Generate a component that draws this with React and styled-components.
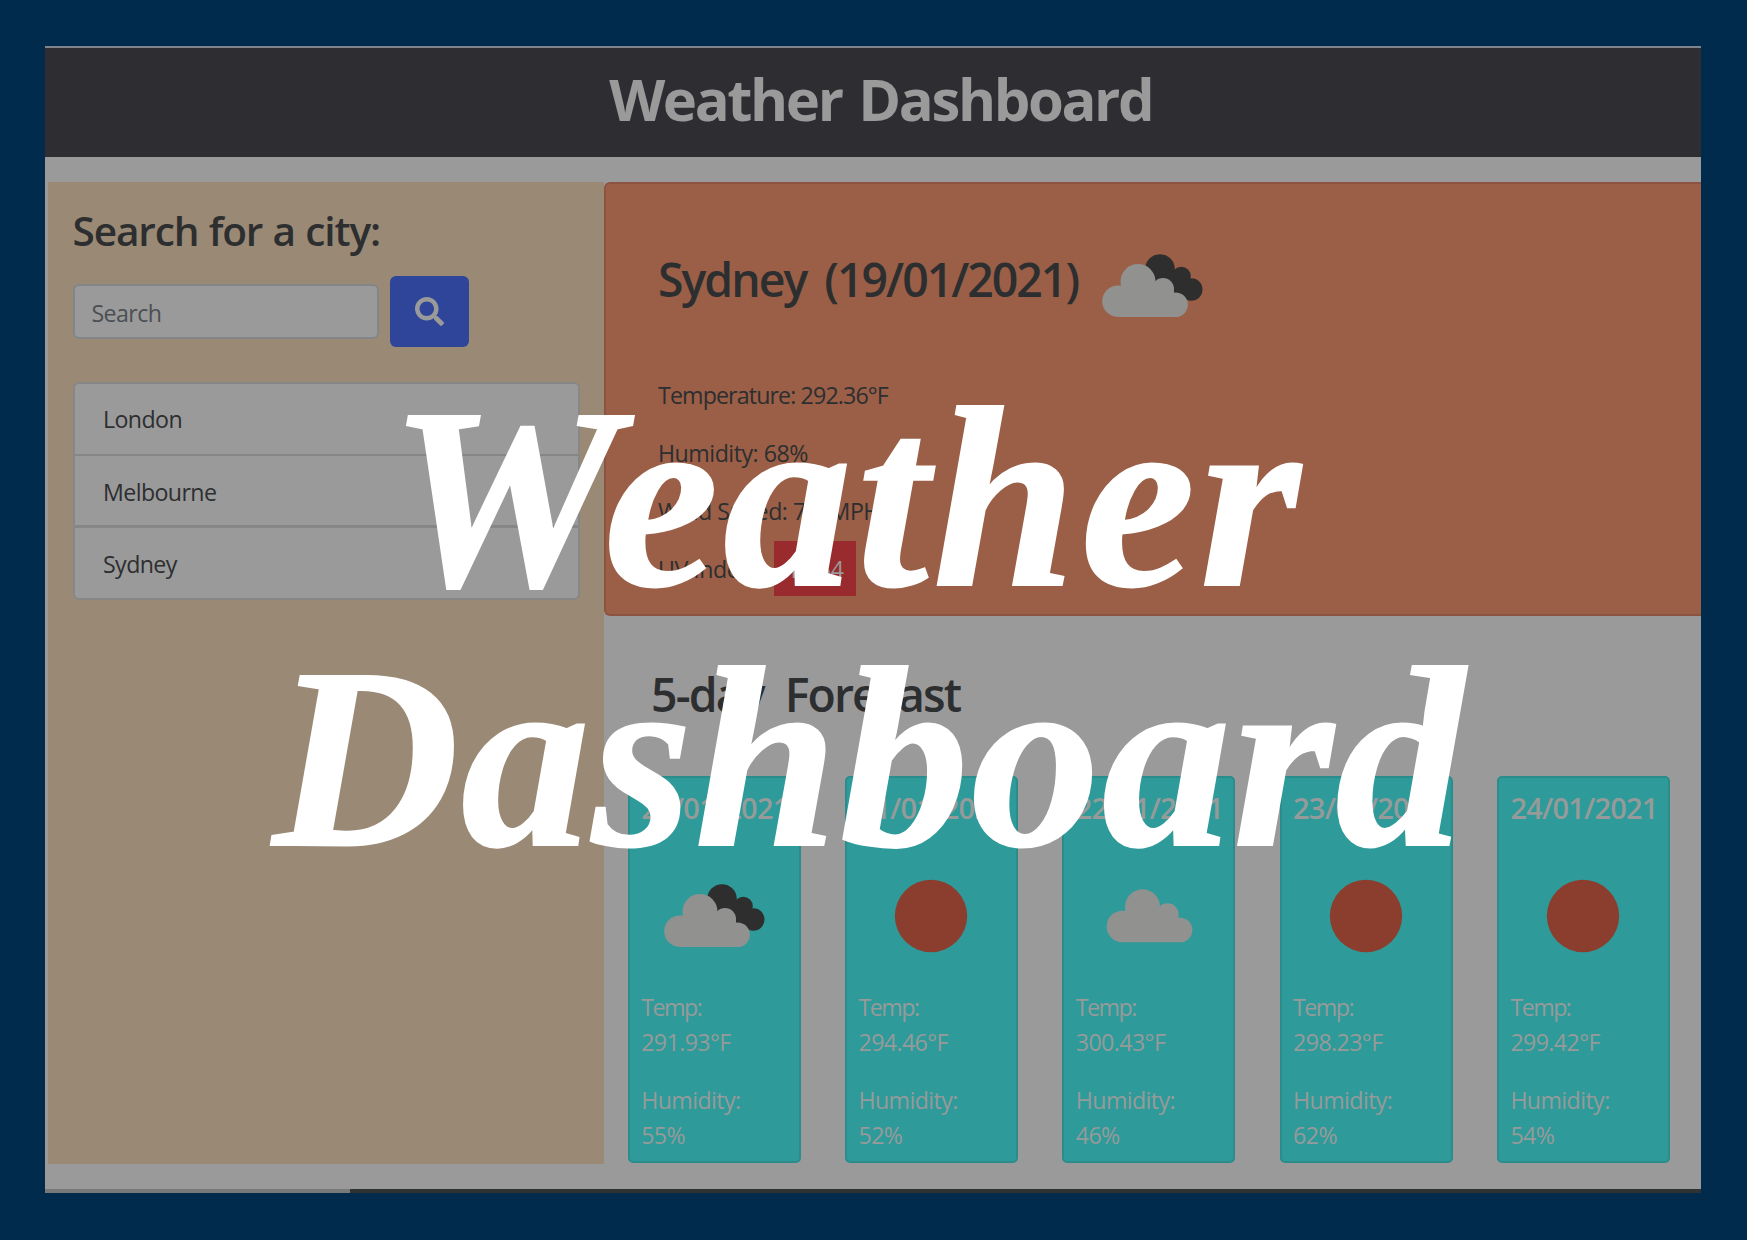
import React from "react";
import styled, { createGlobalStyle } from "styled-components";

const GlobalStyle = createGlobalStyle`
  * { box-sizing: border-box; }
  body {
    margin: 0;
    background: #002b4d;
    font-family: "Open Sans", "Noto Sans", sans-serif;
    font-size: 23.2px;
    line-height: 34.8px;
    letter-spacing: -0.6px;
    color: #2d2e30;
  }
  h1, h2, h3, h4, p, ul { margin: 0; padding: 0; font-weight: inherit; }
`;

const Page = styled.main`
  position: relative;
  width: 1747px;
  height: 1240px;
  padding: 46px 46px 0 45px;
  overflow: hidden;
`;

const Screen = styled.div`
  display: flex;
  flex-direction: column;
  height: 1146.5px;
  background: #9a9a9a;
  border-top: 2px solid #7f858a;
  overflow: hidden;
`;

const TopBar = styled.header`
  height: 109px;
  padding: 16px 0 0 15.5px;
  background: #2e2d31;
  text-align: center;
`;

const BrandTitle = styled.h1`
  font-size: 58px;
  line-height: 69px;
  font-weight: 700;
  letter-spacing: -2.4px;
  word-spacing: 4px;
  color: #9a9a9a;
`;

const Columns = styled.div`
  display: flex;
  flex: 1;
  margin-top: 24.5px;
  padding-left: 3px;
`;

const Sidebar = styled.aside`
  width: 556px;
  height: 982px;
  padding: 25px 24.5px 0;
  background: #9a8a75;
`;

const SearchTitle = styled.h3`
  font-size: 40.6px;
  line-height: 48.7px;
  font-weight: 600;
  letter-spacing: -1.15px;
  word-spacing: 1px;
`;

const SearchForm = styled.div`
  display: flex;
  align-items: center;
  gap: 11px;
  margin-top: 20.5px;
`;

const SearchInput = styled.input`
  width: 306.5px;
  height: 55px;
  padding: 3px 17px 0;
  border: 2px solid #838689;
  border-radius: 6px;
  background: #9a9a9a;
  font: inherit;
  letter-spacing: inherit;
  color: #4b4f54;
  &::placeholder { color: #4b4f54; opacity: 1; }
`;

const SearchButton = styled.button`
  display: flex;
  align-items: center;
  justify-content: center;
  width: 79px;
  height: 71.5px;
  padding-top: 2px;
  border: 0;
  border-radius: 6px;
  background: #2e4599;
`;

const CityList = styled.ul`
  margin-top: 35px;
  border: 2px solid #878788;
  border-radius: 6px;
  background: #9a9a9a;
  list-style: none;
`;

const City = styled.li`
  height: ${(p) => (p.$last ? 70 : p.$heavy ? 72 : 71.5)}px;
  padding: ${(p) => (p.$first ? 17.5 : 19)}px 0 0 28.5px;
  border-bottom: ${(p) => (p.$last ? 0 : p.$heavy ? 3 : 2)}px solid #868686;
`;

const Main = styled.section`
  flex: 1;
  min-width: 0;
`;

const CurrentCard = styled.section`
  height: 434.5px;
  padding: 44.5px 0 0 52px;
  border: 2px solid #8c5440;
  border-right-width: 0;
  border-radius: 6px 0 0 6px;
  background: #9a5f46;
`;

const CurrentHead = styled.div`
  display: flex;
  gap: 15.5px;
  margin-bottom: 33.8px;
`;

const CurrentTitle = styled.h2`
  padding-top: 24px;
  font-size: 46.4px;
  line-height: 55.7px;
  font-weight: 600;
  letter-spacing: -2px;
  word-spacing: 8px;
`;

const Reading = styled.p`
  margin-bottom: 23.2px;
  letter-spacing: ${(p) => p.$track || "-0.5px"};
`;

const UvBadge = styled.span`
  margin-left: 12px;
  padding: 11.6px 12.5px;
  background: #992b2e;
  color: #9a9a9a;
  letter-spacing: -0.4px;
`;

const ForecastTitle = styled.h2`
  margin: 50.5px 0 54.2px;
  padding-left: 47px;
  font-size: 46.4px;
  line-height: 55.7px;
  font-weight: 600;
  letter-spacing: -1.9px;
  word-spacing: 11px;
`;

const Days = styled.div`
  display: flex;
  gap: 44.3px;
  padding-left: 23.7px;
`;

const DayCard = styled.article`
  width: 173px;
  height: 387px;
  padding: 12.5px 0 0 11.5px;
  border: 2px solid #2a8c8b;
  border-radius: 5px;
  background: #2e9b9a;
  color: #969a99;
`;

const DayDate = styled.h4`
  font-size: 29px;
  line-height: 34.8px;
  font-weight: 600;
  letter-spacing: -0.8px;
  white-space: nowrap;
`;

const DayIcon = styled.div`
  display: flex;
  justify-content: center;
  margin: 32px 11.5px 16.2px 0;
`;

const Metric = styled.p`
  margin-bottom: 23.4px;
`;

const MetricLabel = styled.span`
  display: block;
  letter-spacing: ${(p) => p.$track || "inherit"};
`;

const StatusBar = styled.div`
  flex: none;
  height: 3.5px;
  background: linear-gradient(90deg, #77797a 305px, #2f3233 305px);
`;

const Overlay = styled.div`
  position: absolute;
  top: 367.5px;
  left: 0;
  width: 1707px;
  text-align: center;
  font-family: "Liberation Serif", serif;
  font-size: 258px;
  line-height: 260.5px;
  font-weight: 700;
  font-style: italic;
  color: #fff;
  -webkit-text-stroke: 2px #fff;
`;

const OverlayLine = styled.div`
  margin-left: ${(p) => p.$shift}px;
  letter-spacing: ${(p) => p.$track}px;
`;

function Cloud({ x, y }) {
  return (
    <g fill="#919190" transform={`translate(${x} ${y})`}>
      <circle cx="16" cy="37.2" r="15.8" />
      <circle cx="36" cy="17.5" r="17.5" />
      <circle cx="61" cy="25" r="11" />
      <circle cx="73.6" cy="40.7" r="12.3" />
      <path d="M16 30 L20 18 H53 L72 27 V53 H16 Z" />
    </g>
  );
}

function WeatherIcon({ kind }) {
  return (
    <svg width="116" height="116" viewBox="0 0 116 116">
      {kind === "sun" && <circle cx="58" cy="58" r="36.2" fill="#8c3e2e" />}
      {kind === "cloud" && <Cloud x={15.5} y={31.3} />}
      {kind === "broken" && (
        <>
          <g fill="#2e2e2e">
            <circle cx="66" cy="41" r="14.8" />
            <circle cx="87.3" cy="48.2" r="9.5" />
            <circle cx="97.3" cy="61.5" r="11.2" />
            <path d="M66 41 L87 45 L97 61 L92 71 L60 62 Z" />
          </g>
          <Cloud x={8} y={36} />
        </>
      )}
    </svg>
  );
}

function SearchIcon() {
  return (
    <svg width="29" height="29" viewBox="0 0 512 512" fill="#9a9a9a">
      <path d="M505 442.7L405.3 343c-4.5-4.5-10.600-7-17-7H372c27.600-35.300 44-79.700 44-128C416 93.100 322.900 0 208 0S0 93.100 0 208s93.100 208 208 208c48.300 0 92.700-16.400 128-44v16.300c0 6.400 2.500 12.500 7 17l99.700 99.700c9.400 9.400 24.600 9.400 33.900 0l28.300-28.300c9.400-9.400 9.400-24.600.1-34zM208 336c-70.700 0-128-57.200-128-128 0-70.700 57.200-128 128-128 70.700 0 128 57.200 128 128 0 70.700-57.200 128-128 128z" />
    </svg>
  );
}

const cities = ["London", "Melbourne", "Sydney"];

const days = [
  { date: "20/01/2021", icon: "broken", temp: "291.93°F", humidity: "55%" },
  { date: "21/01/2021", icon: "sun", temp: "294.46°F", humidity: "52%" },
  { date: "22/01/2021", icon: "cloud", temp: "300.43°F", humidity: "46%" },
  { date: "23/01/2021", icon: "sun", temp: "298.23°F", humidity: "62%" },
  { date: "24/01/2021", icon: "sun", temp: "299.42°F", humidity: "54%" },
];

export default function App() {
  return (
    <Page>
      <GlobalStyle />
      <Screen>
        <TopBar>
          <BrandTitle>Weather Dashboard</BrandTitle>
        </TopBar>
        <Columns>
          <Sidebar>
            <SearchTitle>Search for a city:</SearchTitle>
            <SearchForm>
              <SearchInput placeholder="Search" />
              <SearchButton aria-label="Search">
                <SearchIcon />
              </SearchButton>
            </SearchForm>
            <CityList>
              {cities.map((city, i) => (
                <City key={city} $first={i === 0} $heavy={i === 1} $last={i === 2}>
                  {city}
                </City>
              ))}
            </CityList>
          </Sidebar>
          <Main>
            <CurrentCard>
              <CurrentHead>
                <CurrentTitle>Sydney (19/01/2021)</CurrentTitle>
                <WeatherIcon kind="broken" />
              </CurrentHead>
              <Reading $track="-0.87px">Temperature: 292.36°F</Reading>
              <Reading>Humidity: 68%</Reading>
              <Reading>Wind Speed: 7.2 MPH</Reading>
              <Reading>
                UV Index: <UvBadge>12.54</UvBadge>
              </Reading>
            </CurrentCard>
            <ForecastTitle>5-day Forecast</ForecastTitle>
            <Days>
              {days.map((day) => (
                <DayCard key={day.date}>
                  <DayDate>{day.date}</DayDate>
                  <DayIcon>
                    <WeatherIcon kind={day.icon} />
                  </DayIcon>
                  <Metric>
                    <MetricLabel $track="-1.5px">Temp:</MetricLabel>
                    {day.temp}
                  </Metric>
                  <Metric>
                    <MetricLabel>Humidity:</MetricLabel>
                    {day.humidity}
                  </Metric>
                </DayCard>
              ))}
            </Days>
          </Main>
        </Columns>
        <StatusBar />
      </Screen>
      <Overlay>
        <OverlayLine $shift={-13} $track={4.5}>Weather</OverlayLine>
        <OverlayLine $shift={32} $track={2}>Dashboard</OverlayLine>
      </Overlay>
    </Page>
  );
}
